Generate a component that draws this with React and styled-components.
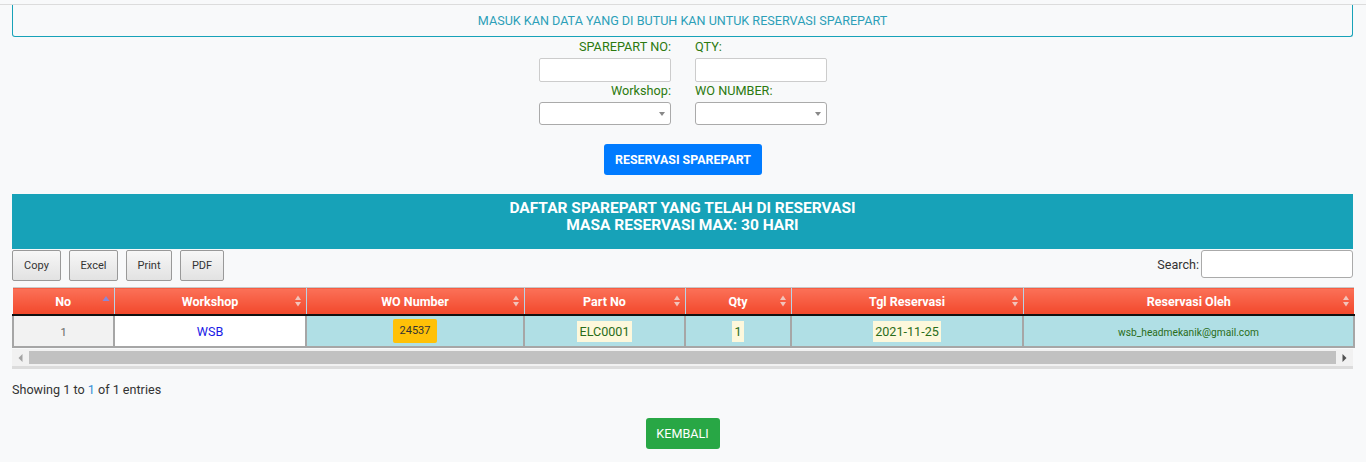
import styled, { createGlobalStyle } from "styled-components";

const GlobalStyle = createGlobalStyle`
    body {
        margin: 0;
        background: #f8f9fa;
        font-family: Roboto, "Liberation Sans", Arial, sans-serif;
        font-size: 12.6px;
        color: #333;
    }
`;

const columns = [
    { title: "No", width: 101, sort: "asc" },
    { title: "Workshop", width: 192 },
    { title: "WO Number", width: 218 },
    { title: "Part No", width: 161 },
    { title: "Qty", width: 106 },
    { title: "Tgl Reservasi", width: 232 },
    { title: "Reservasi Oleh", width: 331 }
];

function SortIcon({ asc }) {
    if (asc) {
        return (
            <SortSvg width="8" height="10" viewBox="0 0 8 10">
                <path d="M4 1 L7.5 6 L0.5 6 Z" fill="#8c87d6" />
            </SortSvg>
        );
    }
    return (
        <SortSvg width="8" height="12" viewBox="0 0 8 12">
            <path d="M4 0.5 L7 5 L1 5 Z" fill="#f2c4bb" />
            <path d="M4 11.5 L7 7 L1 7 Z" fill="#f2c4bb" />
        </SortSvg>
    );
}

function App() {
    return (
        <>
            <GlobalStyle />
            <Page>
                <InfoBox>MASUK KAN DATA YANG DI BUTUH KAN UNTUK RESERVASI SPAREPART</InfoBox>
                <FormGrid>
                    <Field align="right">
                        <Label>SPAREPART NO:</Label>
                        <TextInput type="text" />
                    </Field>
                    <Field>
                        <Label>QTY:</Label>
                        <TextInput type="text" />
                    </Field>
                    <Field align="right">
                        <Label>Workshop:</Label>
                        <Select>
                            <Caret />
                        </Select>
                    </Field>
                    <Field>
                        <Label>WO NUMBER:</Label>
                        <Select>
                            <Caret />
                        </Select>
                    </Field>
                </FormGrid>
                <Center>
                    <PrimaryButton>RESERVASI SPAREPART</PrimaryButton>
                </Center>
                <Banner>
                    DAFTAR SPAREPART YANG TELAH DI RESERVASI
                    <br />
                    MASA RESERVASI MAX: 30 HARI
                </Banner>
                <Toolbar>
                    <ButtonGroup>
                        <ExportButton w={49}>Copy</ExportButton>
                        <ExportButton w={49}>Excel</ExportButton>
                        <ExportButton w={46}>Print</ExportButton>
                        <ExportButton w={44}>PDF</ExportButton>
                    </ButtonGroup>
                    <SearchLabel>
                        Search:
                        <SearchInput type="text" />
                    </SearchLabel>
                </Toolbar>
                <Table>
                    <colgroup>
                        {columns.map(c => (
                            <col key={c.title} style={{ width: c.width }} />
                        ))}
                    </colgroup>
                    <thead>
                        <tr>
                            {columns.map(c => (
                                <Th key={c.title}>
                                    {c.title}
                                    <SortIcon asc={c.sort === "asc"} />
                                </Th>
                            ))}
                        </tr>
                    </thead>
                    <tbody>
                        <tr>
                            <Td bg="#f2f2f2">
                                <Muted>1</Muted>
                            </Td>
                            <Td bg="#ffffff">
                                <WorkshopLink>WSB</WorkshopLink>
                            </Td>
                            <Td>
                                <Badge>24537</Badge>
                            </Td>
                            <Td>
                                <Mark>ELC0001</Mark>
                            </Td>
                            <Td>
                                <Mark>1</Mark>
                            </Td>
                            <Td>
                                <Mark>2021-11-25</Mark>
                            </Td>
                            <Td>
                                <Email>wsb_headmekanik@gmail.com</Email>
                            </Td>
                        </tr>
                    </tbody>
                </Table>
                <Scrollbar>
                    <ScrollArrow>
                        <svg width="5" height="8" viewBox="0 0 5 8">
                            <path d="M4.5 0 L0.5 4 L4.5 8 Z" fill="#a3a3a3" />
                        </svg>
                    </ScrollArrow>
                    <ScrollThumb />
                    <ScrollArrow>
                        <svg width="5" height="8" viewBox="0 0 5 8">
                            <path d="M0.5 0 L4.5 4 L0.5 8 Z" fill="#505050" />
                        </svg>
                    </ScrollArrow>
                </Scrollbar>
                <Info>
                    Showing 1 to <Blue>1</Blue> of 1 entries
                </Info>
                <Center>
                    <BackButton>KEMBALI</BackButton>
                </Center>
            </Page>
        </>
    );
}

const Page = styled.div`
    border-top: 1px solid #dcdcdc;
    margin-top: 4px;
    padding: 0 13px 14px 12px;
`;

const InfoBox = styled.div`
    height: 31px;
    border: 1px solid #17a2b8;
    border-top: none;
    border-radius: 0 0 3px 3px;
    display: flex;
    align-items: center;
    justify-content: center;
    color: #2c9fb8;
    font-size: 12.6px;
`;

const FormGrid = styled.div`
    display: grid;
    grid-template-columns: 132px 132px;
    column-gap: 24px;
    row-gap: 2px;
    justify-content: center;
    margin: 3px 0 0 1px;
`;

const Field = styled.div`
    display: flex;
    flex-direction: column;
    align-items: ${p => (p.align === "right" ? "flex-end" : "flex-start")};
`;

const Label = styled.label`
    color: #2c7a0f;
    font-size: 12.7px;
    line-height: 14px;
    margin-bottom: 4px;
`;

const TextInput = styled.input`
    box-sizing: border-box;
    width: 132px;
    height: 24px;
    border: 1px solid #ccc;
    border-radius: 2px;
    background: #fff;
`;

const Select = styled.div`
    box-sizing: border-box;
    width: 132px;
    height: 23px;
    border: 1px solid #aaa;
    border-radius: 3px;
    background: #fff;
    position: relative;
`;

const Caret = styled.span`
    position: absolute;
    right: 5px;
    top: 9px;
    border-left: 3px solid transparent;
    border-right: 3px solid transparent;
    border-top: 4px solid #888;
`;

const Center = styled.div`
    display: flex;
    justify-content: center;
`;

const PrimaryButton = styled.button`
    margin-top: 19px;
    width: 158px;
    height: 31px;
    border: none;
    border-radius: 3px;
    background: #007bff;
    color: #fff;
    font-family: inherit;
    font-size: 12.4px;
    font-weight: bold;
    margin-left: 1px;
`;

const Banner = styled.div`
    margin-top: 19px;
    height: 55px;
    box-sizing: border-box;
    padding-top: 6px;
    background: #17a2b8;
    color: #fff;
    font-size: 15.5px;
    font-weight: bold;
    line-height: 17px;
    text-align: center;
`;

const Toolbar = styled.div`
    display: flex;
    justify-content: space-between;
    align-items: flex-start;
    margin-top: 1px;
`;

const ButtonGroup = styled.div`
    display: flex;
    gap: 8px;
`;

const ExportButton = styled.button`
    width: ${p => p.w}px;
    height: 31px;
    border: 1px solid #999;
    border-radius: 2px;
    background: linear-gradient(#f7f7f7, #e2e2e2);
    color: #333;
    font-family: inherit;
    font-size: 11px;
    padding: 0;
`;

const SearchLabel = styled.label`
    display: flex;
    align-items: center;
    gap: 2px;
    color: #333;
    font-size: 12.6px;
`;

const SearchInput = styled.input`
    box-sizing: border-box;
    width: 152px;
    height: 28px;
    border: 1px solid #aaa;
    border-radius: 3px;
    background: #fff;
`;

const Table = styled.table`
    margin-top: 6px;
    width: 1341px;
    table-layout: fixed;
    border-collapse: collapse;
`;

const Th = styled.th`
    position: relative;
    height: 26px;
    padding: 0;
    background: linear-gradient(#fb7158, #f2482b);
    color: #fff;
    font-size: 12.5px;
    font-weight: bold;
    border-left: 1px solid #b8d3e6;
    border-top: 1px solid #c8c8c8;
    border-bottom: 2px solid #111;
    text-align: center;
    &:first-child {
        border-left: none;
    }
`;

const SortSvg = styled.svg`
    position: absolute;
    right: 4px;
    top: 7px;
`;

const Td = styled.td`
    height: 30px;
    padding: 0;
    background: ${p => p.bg || "#b0dfe5"};
    border: 2px solid #a6a6a6;
    text-align: center;
    font-size: 12.5px;
`;

const Muted = styled.span`
    color: #666;
    font-size: 11px;
`;

const WorkshopLink = styled.span`
    color: #1a1ae6;
    font-size: 12.6px;
`;

const Badge = styled.span`
    display: inline-block;
    background: #ffc107;
    color: #333;
    font-size: 11px;
    line-height: 24px;
    padding: 0 7px;
    border-radius: 2px;
`;

const Mark = styled.span`
    background: #fdf8dc;
    color: #2a6d1a;
    font-size: 12.6px;
    padding: 3px 2px;
`;

const Email = styled.span`
    color: #2a6d1a;
    font-size: 10.2px;
`;

const Scrollbar = styled.div`
    display: flex;
    align-items: center;
    height: 17px;
    margin-top: 1px;
    border-bottom: 3px solid #dcdcdc;
    background: #f1f1f1;
`;

const ScrollArrow = styled.div`
    width: 17px;
    display: flex;
    justify-content: center;
    align-items: center;
`;

const ScrollThumb = styled.div`
    flex: 1;
    height: 13px;
    background: #c1c1c1;
`;

const Info = styled.div`
    margin-top: 13px;
    font-size: 12.6px;
    color: #333;
`;

const Blue = styled.span`
    color: #3a8fd6;
`;

const BackButton = styled.button`
    margin-top: 21px;
    width: 74px;
    height: 31px;
    border: none;
    border-radius: 3px;
    background: #28a745;
    color: #fff;
    font-family: inherit;
    font-size: 12.6px;
`;

export default App;
